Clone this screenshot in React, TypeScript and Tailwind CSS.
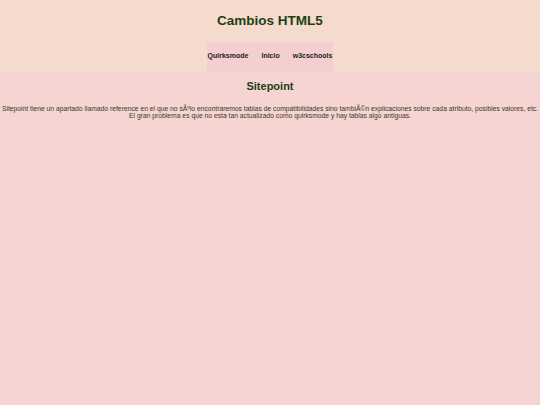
export default function App() {
  return (
    <div className="min-h-[405px] bg-[#f6d4d1] font-['Liberation_Sans',Arial,sans-serif]">
      <header className="bg-[#f5dace] flex flex-col items-center">
        <h1 className="text-[13.5px] font-bold text-[#1d3f12] leading-none pt-[14px] pb-[14px]">Cambios HTML5</h1>
        <nav className="bg-[#f5cfcf] flex h-[30px] items-center gap-[13px] text-[7px] font-bold text-[#222222] pl-[1px]">
          <span>Quirksmode</span>
          <span>Inicio</span>
          <span className="pr-[1px]">w3cschools</span>
        </nav>
      </header>
      <main className="text-center">
        <h2 className="text-[11px] font-bold text-[#1d3f12] leading-none pt-[9px] pb-[13px]">Sitepoint</h2>
        <p className="text-[6.75px] leading-[7.5px] text-[#3b3a1c]">
          Sitepoint tiene un apartado llamado reference en el que no sÃºlo encontraremos tablas de compatibilidades sino tambiÃ©n explicaciones sobre cada atributo, posibles valores, etc.
          <br />
          El gran problema es que no esta tan actualizado como quirksmode y hay tablas algo antiguas.
        </p>
      </main>
    </div>
  );
}
